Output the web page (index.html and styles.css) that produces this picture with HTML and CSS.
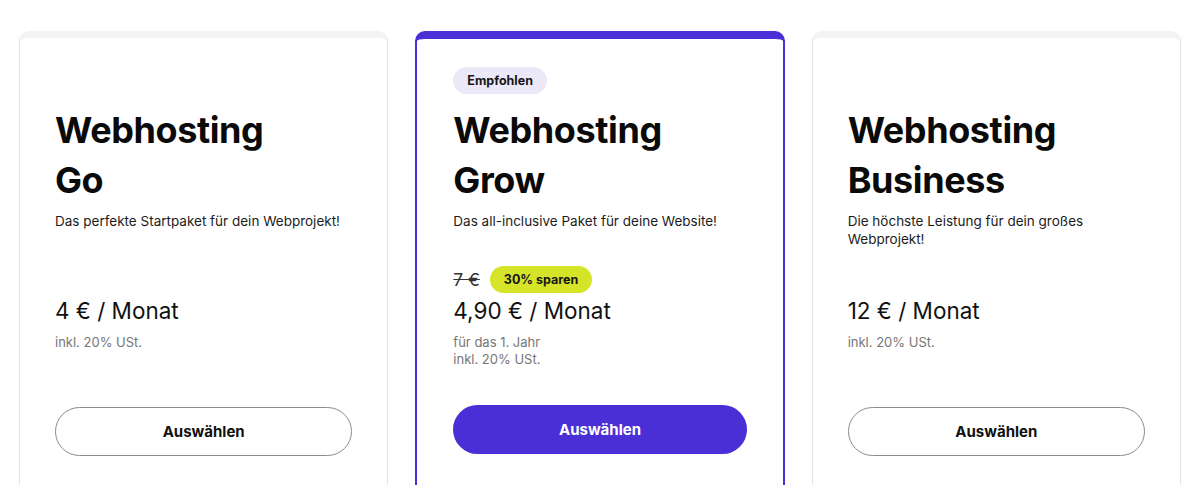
FILE: index.html
```html
<!DOCTYPE html>
<html lang="de">
<head>
    <meta charset="UTF-8">
    <meta name="viewport" content="width=device-width, initial-scale=1.0">
    <title>Webhosting Pakete</title>
    <link rel="stylesheet" href="styles.css">
</head>
<body>
    <div class="plans">
        <!-- Go -->
        <div class="plan">
            <div class="badge-slot"></div>
            <h2 class="plan-title">Webhosting<br>Go</h2>
            <p class="plan-desc">Das perfekte Startpaket für dein Webprojekt!</p>
            <div class="old-price"></div>
            <div class="price">4 € / Monat</div>
            <p class="note">inkl. 20% USt.</p>
            <button class="select-btn">Auswählen</button>
        </div>

        <!-- Grow (recommended) -->
        <div class="plan plan-featured">
            <div class="badge-slot"><span class="badge">Empfohlen</span></div>
            <h2 class="plan-title">Webhosting<br>Grow</h2>
            <p class="plan-desc">Das all-inclusive Paket für deine Website!</p>
            <div class="old-price">
                <s class="strike">7 €</s>
                <span class="save">30% sparen</span>
            </div>
            <div class="price">4,90 € / Monat</div>
            <p class="note">für das 1. Jahr<br>inkl. 20% USt.</p>
            <button class="select-btn primary">Auswählen</button>
        </div>

        <!-- Business -->
        <div class="plan">
            <div class="badge-slot"></div>
            <h2 class="plan-title">Webhosting<br>Business</h2>
            <p class="plan-desc">Die höchste Leistung für dein großes Webprojekt!</p>
            <div class="old-price"></div>
            <div class="price">12 € / Monat</div>
            <p class="note">inkl. 20% USt.</p>
            <button class="select-btn">Auswählen</button>
        </div>
    </div>
</body>
</html>
```

FILE: styles.css
```css
body {
    margin: 0;
    padding: 31px 19px 0;
    background-color: #ffffff;
    font-family: Inter, "Noto Sans", sans-serif;
    color: #111111;
    overflow: hidden;
}

.plans {
    display: grid;
    grid-template-columns: repeat(3, 1fr);
    gap: 27px;
}

.plan {
    display: flex;
    flex-direction: column;
    min-height: 480px;
    border: 1px solid #e4e4e4;
    border-top: 7px solid #f3f3f3;
    border-radius: 10px;
    padding: 29px 35px 0;
}

.plan-featured {
    border: 2px solid #4b2fd6;
    border-top: 8px solid #4b2fd6;
    padding-top: 28px;
    padding-left: 36px;
    padding-right: 36px;
}

.badge-slot {
    height: 27px;
    margin-bottom: 11px;
}

.badge {
    display: inline-flex;
    align-items: center;
    height: 27px;
    padding: 0 14px;
    border-radius: 14px;
    background-color: #ece8f8; /* light lavender */
    font-size: 12.5px;
    font-weight: 700;
    color: #161616;
}

.plan-title {
    margin: 0;
    font-size: 36px;
    line-height: 50px;
    font-weight: 700;
    letter-spacing: -0.4px;
    color: #0a0a0a;
}

.plan-desc {
    margin: 7px 0 0;
    min-height: 36px;
    font-size: 13.5px;
    line-height: 18px;
    color: #1c1c1c;
}

.old-price {
    display: flex;
    align-items: center;
    gap: 10px;
    height: 27px;
    margin-top: 18px;
}

.strike {
    font-size: 17.5px;
    color: #333333;
}

.save {
    display: inline-flex;
    align-items: center;
    height: 27px;
    padding: 0 14px;
    border-radius: 14px;
    background-color: #d5e428; /* lime */
    font-size: 12.5px;
    font-weight: 700;
    color: #161616;
}

.price {
    margin-top: 4px;
    font-size: 22.5px;
    line-height: 28px;
    color: #111111;
}

.note {
    margin: 9px 0 0;
    min-height: 34px;
    font-size: 13px;
    line-height: 17px;
    color: #767676;
}

.select-btn {
    margin-top: 39px;
    height: 49px;
    width: 100%;
    border: 1px solid #8c8c8c;
    border-radius: 25px;
    background-color: #ffffff;
    font-family: Inter, "Noto Sans", sans-serif;
    font-size: 15px;
    font-weight: 700;
    color: #111111;
    cursor: pointer;
}

.select-btn.primary {
    margin-top: 37px;
    border: none;
    background-color: #4b2fd6;
    color: #ffffff;
}
```
